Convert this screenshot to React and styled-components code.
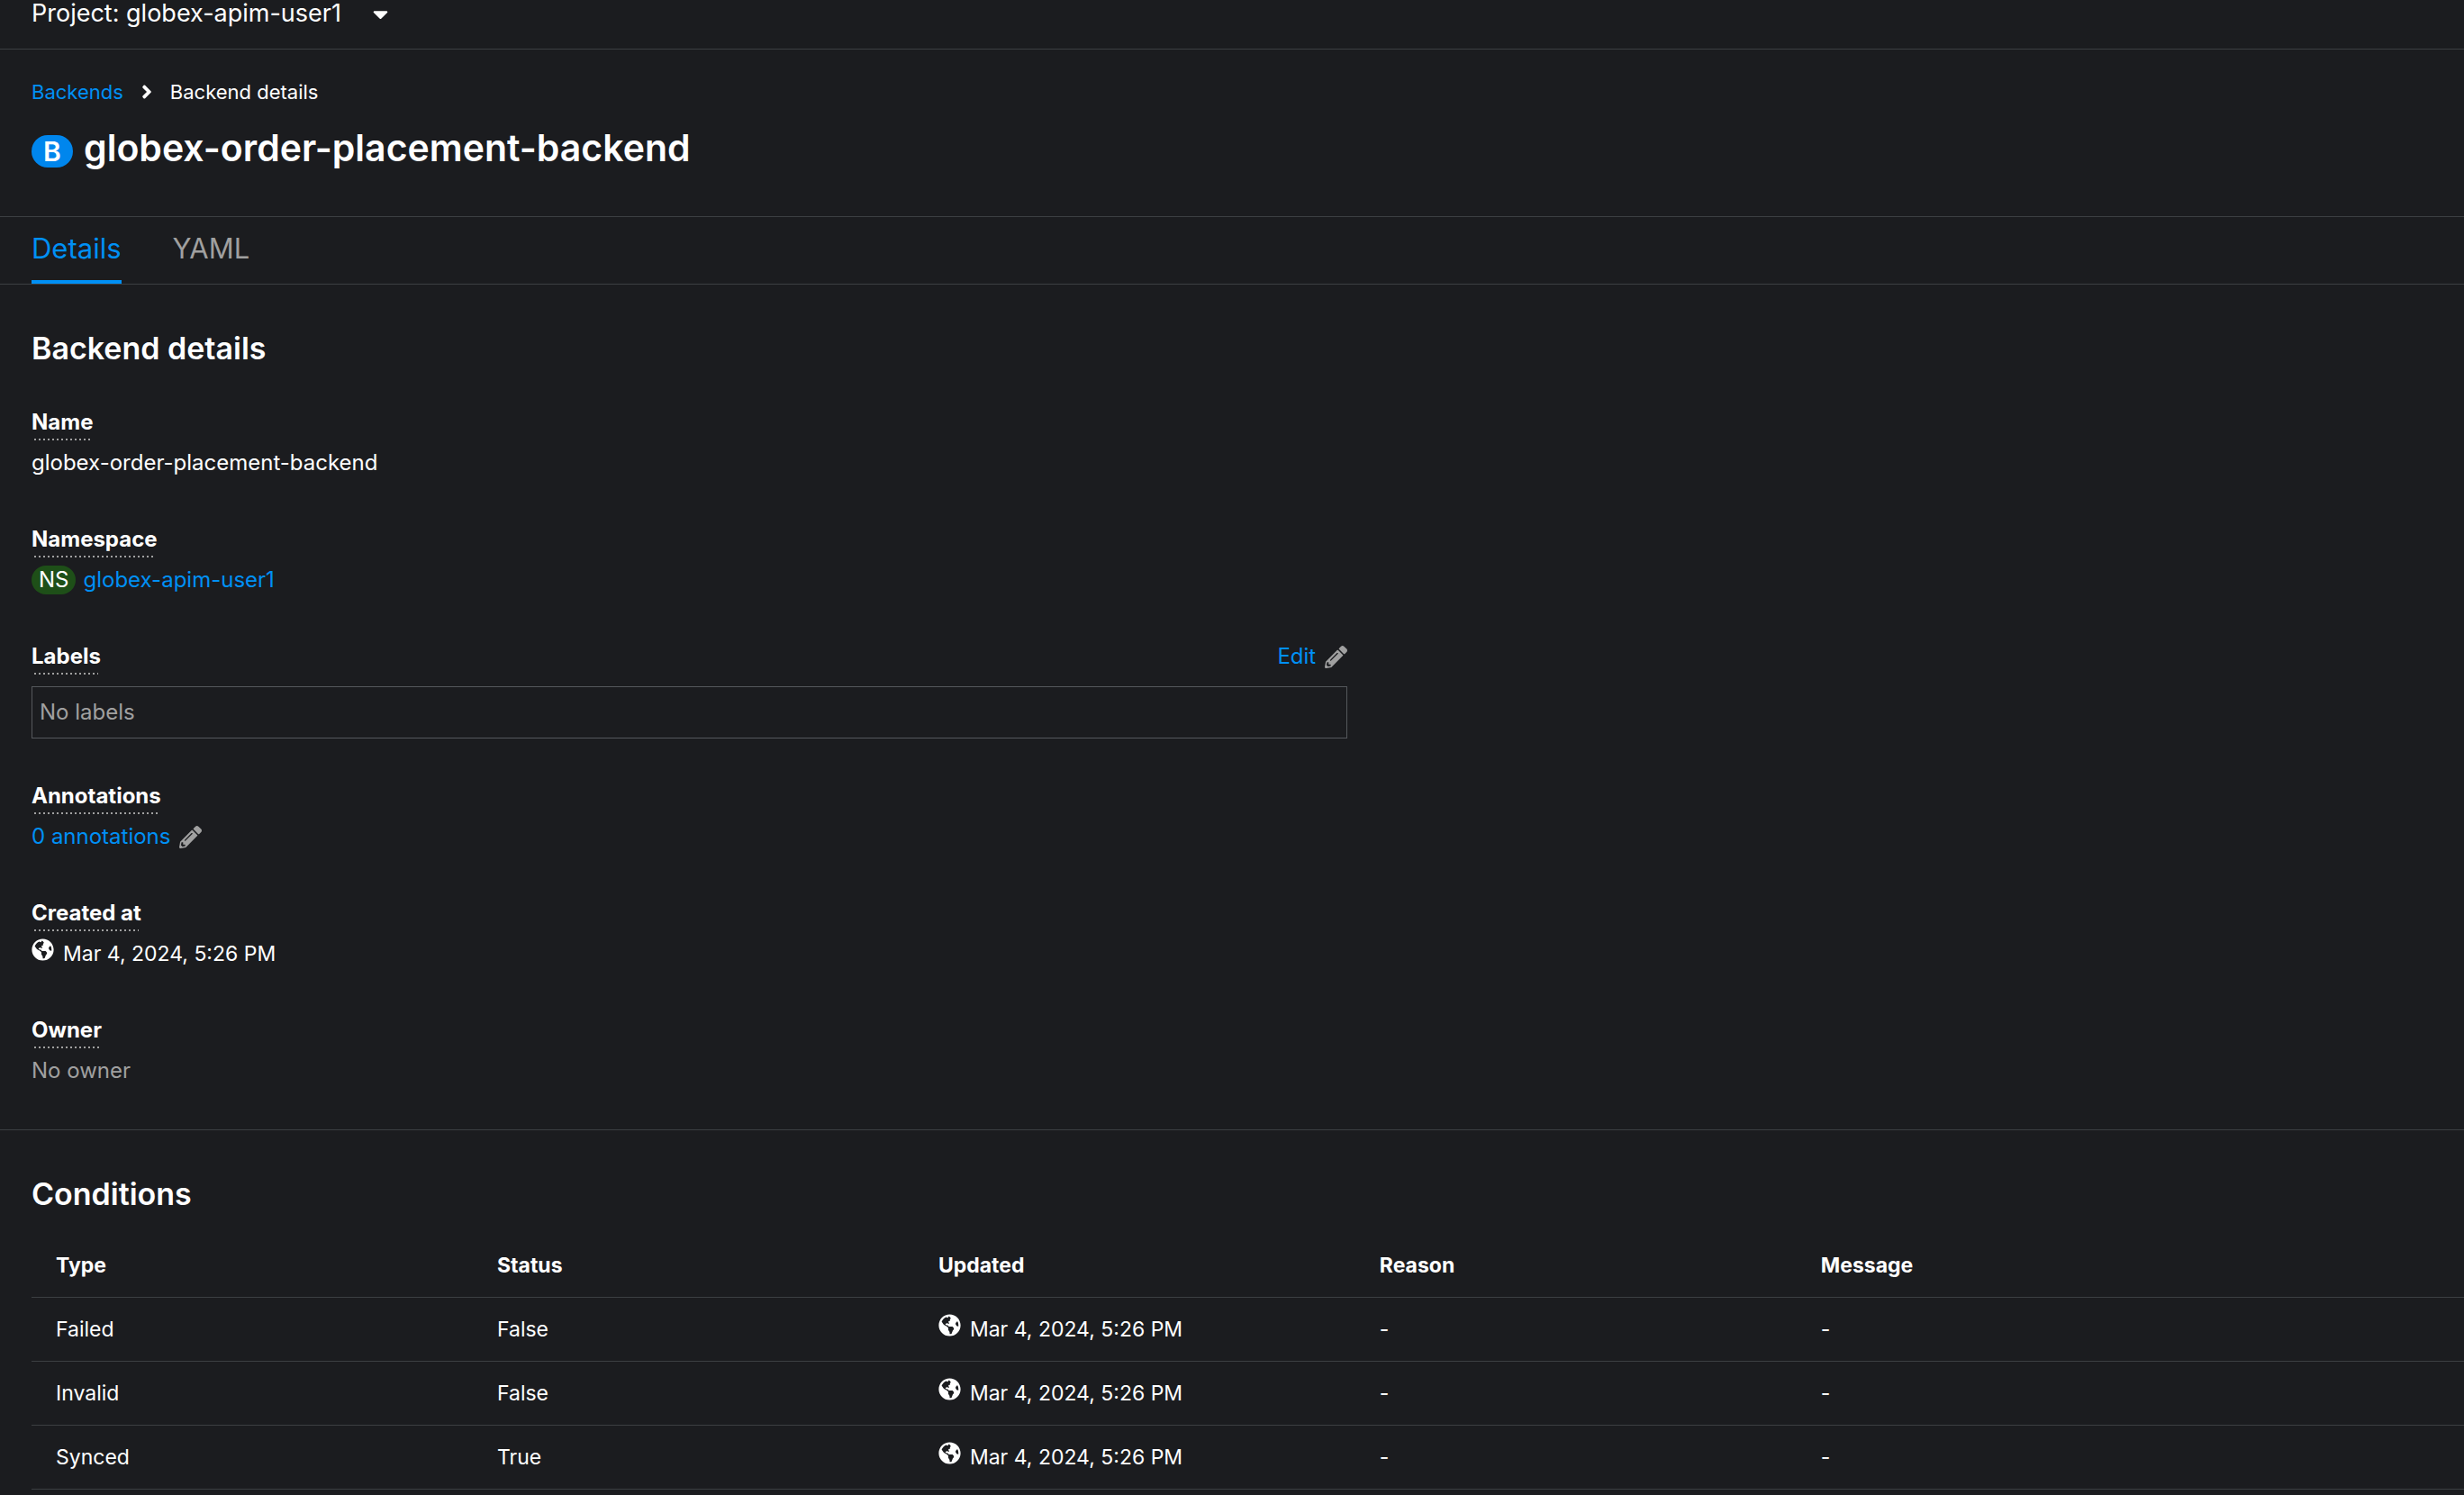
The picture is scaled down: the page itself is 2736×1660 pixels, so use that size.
import React from 'react';
import styled, { createGlobalStyle } from 'styled-components';
import { FaAngleRight, FaCaretDown, FaGlobeAmericas, FaPencilAlt } from 'react-icons/fa';

const GlobalStyle = createGlobalStyle`
  *, *::before, *::after { box-sizing: border-box; }
  body {
    margin: 0;
    background: #1b1c1f;
    color: #ffffff;
    font-family: Inter, "Liberation Sans", sans-serif;
    font-size: 24px;
    line-height: 36px;
  }
  h1, h2, dl, dd, ol { margin: 0; padding: 0; }
  button { font: inherit; color: inherit; background: none; border: 0; padding: 0; cursor: pointer; }
`;

const Page = styled.div`
  min-height: 100vh;
  display: flex;
  flex-direction: column;
`;

const ProjectBar = styled.div`
  display: flex;
  padding: 0 35px 24px;
  border-bottom: 1px solid #3c3f42;
`;

const ProjectButton = styled.button`
  && {
    display: flex;
    align-items: center;
    gap: 30px;
    font-size: 27px;
    line-height: 30px;
  }
`;

const Header = styled.header`
  padding: 29px 35px 51px;
  border-bottom: 1px solid #3c3f42;
`;

const Link = styled.a`
  color: #0090f5;
  text-decoration: none;
`;

const Breadcrumbs = styled.ol`
  display: flex;
  align-items: center;
  gap: 14px;
  list-style: none;
  font-size: 22px;

  li { display: flex; align-items: center; gap: 14px; }
`;

const TitleRow = styled.div`
  display: flex;
  align-items: baseline;
  gap: 12px;
  margin-top: 19px;
`;

const Title = styled.h1`
  font-size: 41px;
  font-weight: 600;
  line-height: 50px;
`;

const KindBadge = styled.span`
  min-width: 46px;
  border-radius: 18px;
  background: #0086ed;
  text-align: center;
  font-size: 30px;
  font-weight: 600;
`;

const NamespaceBadge = styled.span`
  padding: 0 8px;
  border-radius: 16px;
  background: #1e4f18;
  line-height: 32px;
`;

const Tabs = styled.nav`
  display: flex;
  gap: 57px;
  padding: 0 35px;
  border-bottom: 1px solid #3c3f42;
`;

const Tab = styled.button`
  && {
    padding: 12px 0;
    border-bottom: 4px solid ${(p) => (p.$active ? '#0090f5' : 'transparent')};
    color: ${(p) => (p.$active ? '#0090f5' : '#a0a0a0')};
    font-size: 31px;
    line-height: 46px;
  }
`;

const Section = styled.section`
  padding: 49px 0 ${(p) => (p.$divided ? '44px' : '0')} 35px;
  border-bottom: ${(p) => (p.$divided ? '1px solid #3c3f42' : '0')};
`;

const SectionTitle = styled.h2`
  font-size: 34px;
  font-weight: 600;
  line-height: 44px;
`;

const Details = styled.dl`
  display: flex;
  flex-direction: column;
  gap: 46px;
  width: 54.1%;
  margin-top: 42px;
`;

const FieldHead = styled.div`
  display: flex;
  justify-content: space-between;
  align-items: flex-start;
`;

const Term = styled.dt`
  font-weight: 700;

  &::after {
    content: '';
    display: block;
    height: 2px;
    margin: 0 3px;
    background: repeating-linear-gradient(90deg, #a0a0a0 0 2px, transparent 2px 5px);
  }
`;

const Value = styled.dd`
  display: flex;
  align-items: center;
  gap: 8px;
  margin-top: 7px;
  padding-bottom: 3px;
  color: ${(p) => (p.$muted ? '#a0a0a0' : 'inherit')};
`;

const LabelBox = styled.dd`
  && {
    margin-top: 13px;
    padding: 10px 8px;
    border: 1px solid #55585c;
    color: #a0a0a0;
  }
`;

const EditButton = styled.button`
  && {
    display: flex;
    align-items: center;
    gap: 10px;
    color: #0090f5;
  }

  svg { color: #a0a0a0; }
`;

const Time = styled.span`
  font-size: 23px;
  white-space: nowrap;

  svg { margin-right: 10px; vertical-align: baseline; }
`;

const Table = styled.table`
  width: 100%;
  margin-top: 22px;
  table-layout: fixed;
  border-spacing: 0;
  font-size: 23px;

  th, td {
    padding: 17px 0 17px 27px;
    border-bottom: 1px solid #3c3f42;
    text-align: left;
  }
  th { font-weight: 700; width: 18.14%; }
  th:last-child { width: auto; }
`;

const STAMP = 'Mar 4, 2024, 5:26 PM';

const columns = ['Type', 'Status', 'Updated', 'Reason', 'Message'];

const conditions = [
  { type: 'Failed', status: 'False' },
  { type: 'Invalid', status: 'False' },
  { type: 'Synced', status: 'True' },
];

function Timestamp() {
  return (
    <Time>
      <FaGlobeAmericas size={25} aria-hidden="true" />
      {STAMP}
    </Time>
  );
}

function Field({ label, action, children }) {
  return (
    <div>
      <FieldHead>
        <Term>{label}</Term>
        {action}
      </FieldHead>
      {children}
    </div>
  );
}

export default function App() {
  return (
    <Page>
      <GlobalStyle />
      <ProjectBar>
        <ProjectButton type="button">
          Project: globex-apim-user1
          <FaCaretDown size={27} aria-hidden="true" />
        </ProjectButton>
      </ProjectBar>

      <Header>
        <Breadcrumbs>
          <li>
            <Link href="#backends">Backends</Link>
            <FaAngleRight size={24} aria-hidden="true" />
          </li>
          <li>Backend details</li>
        </Breadcrumbs>
        <TitleRow>
          <KindBadge>B</KindBadge>
          <Title>globex-order-placement-backend</Title>
        </TitleRow>
      </Header>

      <Tabs>
        <Tab type="button" $active>Details</Tab>
        <Tab type="button">YAML</Tab>
      </Tabs>

      <Section $divided>
        <SectionTitle>Backend details</SectionTitle>
        <Details>
          <Field label="Name">
            <Value>globex-order-placement-backend</Value>
          </Field>
          <Field label="Namespace">
            <Value>
              <NamespaceBadge>NS</NamespaceBadge>
              <Link href="#namespace">globex-apim-user1</Link>
            </Value>
          </Field>
          <Field
            label="Labels"
            action={
              <EditButton type="button">
                Edit
                <FaPencilAlt size={25} aria-hidden="true" />
              </EditButton>
            }
          >
            <LabelBox>No labels</LabelBox>
          </Field>
          <Field label="Annotations">
            <Value>
              <EditButton type="button">
                0 annotations
                <FaPencilAlt size={25} aria-hidden="true" />
              </EditButton>
            </Value>
          </Field>
          <Field label="Created at">
            <Value><Timestamp /></Value>
          </Field>
          <Field label="Owner">
            <Value $muted>No owner</Value>
          </Field>
        </Details>
      </Section>

      <Section>
        <SectionTitle>Conditions</SectionTitle>
        <Table>
          <thead>
            <tr>
              {columns.map((name) => <th key={name} scope="col">{name}</th>)}
            </tr>
          </thead>
          <tbody>
            {conditions.map(({ type, status }) => (
              <tr key={type}>
                <td>{type}</td>
                <td>{status}</td>
                <td><Timestamp /></td>
                <td>-</td>
                <td>-</td>
              </tr>
            ))}
          </tbody>
        </Table>
      </Section>
    </Page>
  );
}
